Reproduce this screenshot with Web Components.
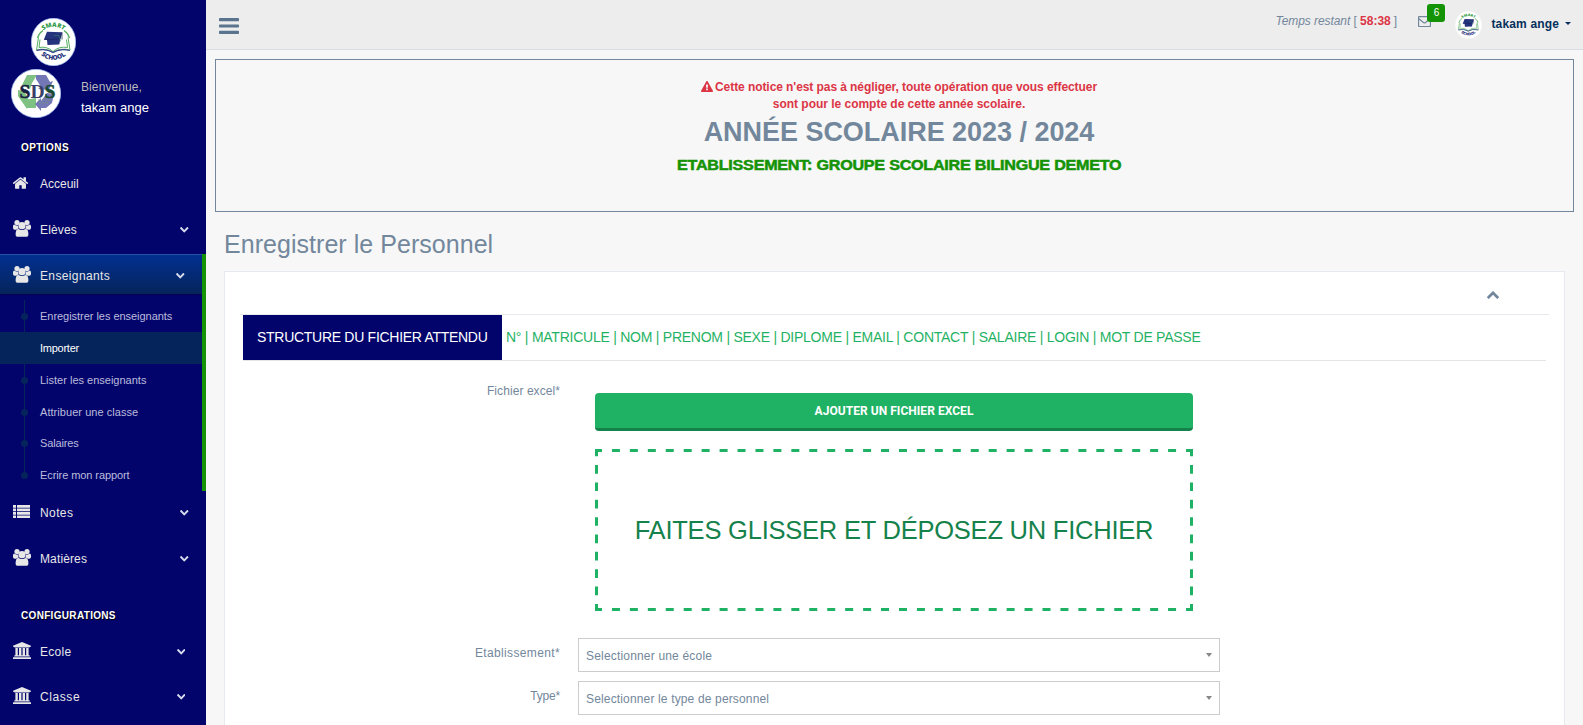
<!DOCTYPE html>
<html lang="fr">
<head>
<meta charset="utf-8">
<title>Enregistrer le Personnel</title>
<style>
html,body{margin:0;height:725px;overflow:hidden;background:#f7f7f7}
body{font:12px/17px "Liberation Sans",Arial,sans-serif;color:#73879c}
</style>
</head>
<body>
<school-app></school-app>
<script>
const define=(name,html,setup)=>customElements.define(name,class extends HTMLElement{
  connectedCallback(){
    if(this.shadowRoot)return;
    const t=document.createElement('template');
    t.innerHTML=typeof html==='function'?html(this):html;
    this.attachShadow({mode:'open'}).append(t.content.cloneNode(true));
    if(setup)setup(this);
  }
});

/* Text set to a given measure: the letters are spread evenly over w pixels. */
define('set-text','<style>:host{display:inline-block;white-space:pre}</style><span><slot></slot></span>',el=>{
  const span=el.shadowRoot.querySelector('span');
  const n=[...el.textContent].length, w=+el.getAttribute('w');
  const gap=(w-span.offsetWidth)/n;
  span.style.letterSpacing=gap.toFixed(3)+'px';
});

const ICONS={
home:['0 0 1792 1792','<path d="M1472 992v480q0 26-19 45t-45 19h-384v-384h-256v384h-384q-26 0-45-19t-19-45v-480q0-1 .5-3t.5-3l575-474 575 474q1 2 1 6zm223-69l-62 74q-8 9-21 11h-3q-13 0-21-7l-692-577-692 577q-12 8-24 7-13-2-21-11l-62-74q-8-10-7-23.5t11-21.5l719-599q32-26 76-26t76 26l244 204v-195q0-14 9-23t23-9h192q14 0 23 9t9 23v408l219 182q10 8 11 21.5t-7 23.5z"/>'],
users:['0 0 18 17','<circle cx="4" cy="2.6" r="2.6"/><circle cx="14" cy="2.6" r="2.6"/><path d="M0 8V6.500Q.1 4.600 1.200 4.600 2.600 5.900 5 5.600 5 7.600 5.800 8.400 4.100 8.800 3.300 9.800H1.800Q0 9.800 0 8zM18 8V6.500Q17.900 4.600 16.800 4.600 15.400 5.900 13 5.600 13 7.600 12.200 8.400 13.900 8.800 14.700 9.800H16.200Q18 9.800 18 8z"/><circle cx="9" cy="5.7" r="3.6"/><path d="M2.600 14.200Q2.600 8.900 5.600 8.900 7 9.900 9 9.900T12.400 8.900Q15.400 8.900 15.400 14.200 15.400 16.800 13 16.800H5Q2.600 16.800 2.600 14.200z"/>'],
list:['0 0 17 13','<path d="M0 0h3v2.700H0zM4 0h13v2.700H4zM0 3.500h3v2.700H0zM4 3.500h13v2.700H4zM0 7h3v2.700H0zM4 7h13v2.700H4zM0 10.500h3V13H0zM4 10.500h13V13H4z"/>'],
bank:['-128 128 1920 1792','<path d="M832 128l960 384v128h-128q0 26-20.5 45t-48.5 19h-1526q-28 0-48.5-19t-20.5-45h-128v-128zm-704 640h256v768h128v-768h256v768h128v-768h256v768h128v-768h256v768h59q28 0 48.5 19t20.5 45v64h-1664v-64q0-26 20.5-45t48.5-19h59zm1595 960q28 0 48.5 19t20.5 45v128h-1920v-128q0-26 20.5-45t48.5-19z"/>'],
down:['90 533 1612 1035','<path d="M1683 808l-742 741q-19 19-45 19t-45-19l-742-741q-19-19-19-45.5t19-45.5l166-165q19-19 45-19t45 19l531 531 531-531q19-19 45-19t45 19l166 165q19 19 19 45.5t-19 45.5z"/>'],
up:['90 480 1612 1035','<path d="M1683 1331l-166 165q-19 19-45 19t-45-19l-531-531-531 531q-19 19-45 19t-45-19l-166-165q-19-19-19-45.5t19-45.5l742-741q19-19 45-19t45 19l742 741q19 19 19 45.5t-19 45.5z"/>'],
warning:['0 0 1792 1664','<path d="M1024 1375v-190q0-14-9.5-23.5t-22.5-9.5h-192q-13 0-22.5 9.5t-9.5 23.5v190q0 14 9.5 23.5t22.5 9.5h192q13 0 22.5-9.5t9.5-23.5zm-2-374l18-459q0-12-10-19-13-11-24-11h-220q-11 0-24 11-10 7-10 21l17 457q0 10 10 16.5t24 6.5h185q14 0 23.5-6.5t10.5-16.5zm-14-934l768 1408q35 63-2 126-17 29-46.5 46t-63.5 17h-1536q-34 0-63.5-17t-46.5-46q-37-63-2-126l768-1408q17-31 47-49t65-18 65 18 47 49z"/>'],
bars:['0 0 20 16','<rect width="20" height="3.200" rx=".8"/><rect y="6.400" width="20" height="3.200" rx=".8"/><rect y="12.800" width="20" height="3.200" rx=".8"/>'],
mail:['0 0 13 11','<path d="M1.500.5h10q1 0 1 1v8q0 1-1 1h-10q-1 0-1-1v-8q0-1 1-1zM.6 2.500 5.400 6.400q1.100.8 2.200 0L12.400 2.500" fill="none" stroke="currentColor" stroke-width="1.250"/>'],
caret:['0 0 6 4','<path d="M0 0h6L3 4z"/>']
};
define('ui-icon',el=>{
  const [box,body]=ICONS[el.getAttribute('name')];
  return `<style>:host{display:block;flex:none}svg{display:block;width:100%;height:100%;fill:currentColor}</style><svg viewBox="${box}" preserveAspectRatio="none">${body}</svg>`;
});

define('smart-logo',`<style>:host{display:block;flex:none}svg{display:block;width:100%;height:100%}</style>
<svg viewBox="0 0 45 48" preserveAspectRatio="none">
<defs><path id="top" d="M8 18A16 16 0 0 1 37 18"/><path id="bot" d="M6 31.500A18.300 18.300 0 0 0 39 31.500"/></defs>
<ellipse cx="22.500" cy="24" rx="22.200" ry="23.700" fill="#fff" stroke="var(--ring,#a9c3ee)" stroke-width=".7"/>
<g font-family="Open Sans,sans-serif" font-weight="800" text-anchor="middle">
<text font-size="6.200" fill="#2f9a48"><textPath href="#top" startOffset="50%">SMART</textPath></text>
<text font-size="6.500" fill="#28347e"><textPath href="#bot" startOffset="50%">SCHOOL</textPath></text></g>
<path d="M6.500 20Q8 15 12 12.500M38.500 20Q37 15 33 12.500" fill="none" stroke="#58ae62" stroke-width="1.400"/>
<path d="M7.500 19.500 5.500 32Q15 29.500 22 34.500 29 29.500 39 32L37 19.500M9 21.500 8 29.500Q16 28 22 33.500 28 28 36.500 29.500L35.500 21.500" fill="none" stroke="#58ae62" stroke-width="1"/>
<path d="M5.500 32.500Q15 30 22 34.500 29 30 39 32.500" fill="none" stroke="#34428c" stroke-width="1.200"/>
<path d="M16 13.800 31 14.300 29.300 21 28.300 26.500 16.500 27 16 22 12.800 21.700z" fill="#25327e"/><path d="M13.500 21.600 29 21 31 14.500v7" fill="none" stroke="#151f58" stroke-width=".7"/>
<path d="M23 17.500h5l1.500 6" fill="none" stroke="#2f8060" stroke-width=".6"/>
</svg>`);

define('sds-logo',`<style>:host{display:block;flex:none}svg{display:block;width:100%;height:100%}</style>
<svg viewBox="0 0 50 49">
<ellipse cx="25" cy="24.500" rx="24.700" ry="24.200" fill="#fff" stroke="#9fbdee" stroke-width=".7"/>
<path d="M16 6h10l-5 8-2 6-8-4zM7 21l6 1 5 9-2 9-9-13zM14 31l11-2v10l-9 0z" fill="#7fc182"/>
<path d="M25 6h10l4 7 3-1-4 9-11-1 3-2-5-8zM36 24l7 1-2 9-6 5h-5v3l-6-7 6-6v3z" fill="#7477b5"/>
<g font-family="Liberation Serif,serif" font-weight="700" font-size="19.500" stroke-width=".5"><text x="8.500" y="28.500" textLength="36" lengthAdjust="spacingAndGlyphs"><tspan fill="#17203f" stroke="#17203f">S</tspan><tspan fill="#383f68">D</tspan><tspan fill="#184b32" stroke="#184b32">S</tspan></text></g>
<path d="M27 31h13M28 34h10" stroke="#6f9d63" stroke-width=".7" stroke-dasharray="2 1.500"/>
</svg>`);

define('nav-item',el=>`<style>
:host{display:flex;box-sizing:border-box;height:40px;padding:4px 0 0 13px;margin-bottom:6px;align-items:center;color:#e7e7e7}
:host([active]){margin:0 4px 0 0;background:linear-gradient(#023092,#05245b);box-shadow:inset 0 1px 0 #24529e,0 1px 0 #030350}
:host([tight]){margin-bottom:5px}
.i{width:27px;flex:none;padding-bottom:3px}
.i ui-icon{width:18px;height:17px}
.i .home{width:17px;height:16px;margin-left:-1px}
.i .list{width:17px;height:13px}
.t{flex:1}
.c{width:8.500px;height:5.500px;margin:0 17.500px 0 0;color:#d6dcec}
:host([tight]) .c{margin-right:21px}
</style><div class="i"><ui-icon class="${el.getAttribute('icon')}" name="${el.getAttribute('icon')}"></ui-icon></div><div class="t"><slot></slot></div>${el.hasAttribute('leaf')?'':'<ui-icon class="c" name="down"></ui-icon>'}`);

define('sub-item',`<style>
:host{display:flex;align-items:center;height:32px;padding-left:21px;font-size:11px;color:#bcbcdc}
:host([short]){height:31px}
:host([current]){background:#05245b;color:#fff}
i{width:7px;height:7px;border-radius:50%;background:#05245b;margin-right:12px}
:host([current]) i{visibility:hidden}
</style><i></i><slot></slot>`);

define('sub-menu',`<style>
:host{display:block;margin-right:4px;padding-top:6px;background:linear-gradient(#05245b,#05245b) 24px 6px/1px 176px no-repeat}
</style><slot></slot>`);

define('nav-heading','<style>:host{display:block;height:16px;line-height:16px;padding-left:21px;font-size:10px;font-weight:700;color:#fff;text-shadow:1px 1px #000}</style><slot></slot>');

define('side-nav',`<style>
:host{display:block;box-sizing:border-box;width:206px;height:725px;overflow:hidden;background:#02046c;padding-top:18px;flex:none}
.logo{width:45px;height:48px;margin-left:31px}
.who{display:flex;margin:3px 0 0 11px;height:71px}
sds-logo{width:50px;height:49px}
.names{margin:9px 0 0 20px}
.names div{height:21px;line-height:18px}
.hi{color:#bababa}.me{color:#fff;font-size:13px}
.first{margin-bottom:6px}
.group{box-shadow:inset -4px 0 #159306}
.second{margin:31px 0 6px}
</style>
<smart-logo class="logo"></smart-logo>
<div class="who"><sds-logo></sds-logo><div class="names"><div class="hi"><set-text w="61">Bienvenue,</set-text></div><div class="me"><set-text w="68">takam ange</set-text></div></div></div>
<nav-heading class="first"><set-text w="48">OPTIONS</set-text></nav-heading>
<nav-item icon="home" leaf><set-text w="39">Acceuil</set-text></nav-item>
<nav-item icon="users"><set-text w="37">Elèves</set-text></nav-item>
<div class="group"><nav-item icon="users" active><set-text w="70">Enseignants</set-text></nav-item>
<sub-menu>
<sub-item><set-text w="132">Enregistrer les enseignants</set-text></sub-item>
<sub-item current><set-text w="39">Importer</set-text></sub-item>
<sub-item><set-text w="106">Lister les enseignants</set-text></sub-item>
<sub-item><set-text w="98">Attribuer une classe</set-text></sub-item>
<sub-item short><set-text w="39">Salaires</set-text></sub-item>
<sub-item><set-text w="89.500">Ecrire mon rapport</set-text></sub-item>
</sub-menu></div>
<nav-item icon="list"><set-text w="33">Notes</set-text></nav-item>
<nav-item icon="users"><set-text w="47">Matières</set-text></nav-item>
<nav-heading class="second"><set-text w="94.500">CONFIGURATIONS</set-text></nav-heading>
<nav-item icon="bank" tight><set-text w="31.500">Ecole</set-text></nav-item>
<nav-item icon="bank" tight><set-text w="40.500">Classe</set-text></nav-item>`);

define('mail-badge',`<style>
:host{display:block;position:relative;width:13px;height:11px}
ui-icon{width:13px;height:11px}
b{position:absolute;left:9px;top:-12px;width:18px;height:18px;border-radius:3px;background:#159306;color:#fff;font-weight:400;font-size:10px;line-height:18px;text-align:center}
</style><ui-icon name="mail"></ui-icon><b><slot></slot></b>`);

define('top-bar',`<style>
:host{display:flex;box-sizing:border-box;height:50px;background:#ededed;border-bottom:1px solid #d9dee4;padding-left:13px}
.bars{width:20px;height:16px;margin-top:18px;color:#5a738e}
.time{margin:13px 22px 0 auto}.time b{color:#dc3545}
mail-badge{margin:16px 24px 0 0}
smart-logo{width:27px;height:28px;margin:11px 9px 0 0;--ring:#f4f4f4}
.user{margin:16px 6px 0 0;color:#06305c;font-weight:700}
.caret{width:6px;height:3px;margin:22px 12px 0 0;color:#06305c}
</style><ui-icon class="bars" name="bars"></ui-icon>
<div class="time"><set-text w="78" style="font-style:italic">Temps restant </set-text><set-text w="7">[ </set-text><set-text w="31"><b>58:38</b></set-text><set-text w="6"> ]</set-text></div>
<mail-badge>6</mail-badge><smart-logo></smart-logo><div class="user"><set-text w="67.500">takam ange</set-text></div><ui-icon class="caret" name="caret"></ui-icon>`);

define('year-notice',`<style>
:host{display:flex;flex-direction:column;align-items:center;box-sizing:border-box;height:153px;margin:9px 9px 0;border:1px solid #73879c;padding:19px 0 0 9px}
.w{display:flex;color:#dc3545;font-weight:700;height:17px}
.w ui-icon{width:12px;height:11px;margin:2px 2px 0 0}
.y{font-size:27px;font-weight:700;line-height:34px;margin-top:2px}
.e{font-weight:700;font-size:14px;line-height:20px;color:#159306;margin-top:6px;transform:scaleX(1.15);-webkit-text-stroke:.5px #159306}
</style>
<div class="w"><ui-icon name="warning"></ui-icon><set-text w="382">Cette notice n'est pas à négliger, toute opération que vous effectuer</set-text></div>
<div class="w"><set-text w="252">sont pour le compte de cette année scolaire.</set-text></div>
<div class="y"><set-text w="391">ANNÉE SCOLAIRE 2023 / 2024</set-text></div>
<div class="e"><set-text w="386">ETABLISSEMENT: GROUPE SCOLAIRE BILINGUE DEMETO</set-text></div>`);

define('file-format',`<style>
:host{display:flex;height:45px;margin:0 18px;border-bottom:1px solid #e5e5e5;font-size:14px;line-height:44px}
.k{background:#02046c;color:#fff;width:245px;padding-left:14px;margin-right:4px}
.v{color:#1fb264}
</style><div class="k"><set-text w="231">STRUCTURE DU FICHIER ATTENDU</set-text></div><div class="v"><set-text w="695">N° | MATRICULE | NOM | PRENOM | SEXE | DIPLOME | EMAIL | CONTACT | SALAIRE | LOGIN | MOT DE PASSE</set-text></div>`);

define('file-drop',`<style>
:host{display:block;width:598px}
.b{box-sizing:border-box;height:38px;border-radius:4px;border-bottom:3px solid #15824b;background:#1fb264;color:#fff;font:700 12px/37px Roboto,sans-serif;text-align:center}
.d{display:grid;height:162px;margin-top:18px;color:#15824b;font-size:25.500px;line-height:163px;text-align:center}
.d>*{grid-area:1/1}
svg{display:block}
</style><div class="b"><set-text w="159">AJOUTER UN FICHIER EXCEL</set-text></div><div class="d">
<svg width="598" height="162" fill="none" stroke="#1fb264" stroke-width="3"><path d="M-1 1.500H598M-1 160.500H598" stroke-dasharray="8 9.940"/><path d="M1.500 -1.350V162M596.500 -1.350V162" stroke-dasharray="8.700 8.670"/></svg>
<div><set-text w="519">FAITES GLISSER ET DÉPOSEZ UN FICHIER</set-text></div></div>`);

define('pick-list',`<style>
:host{display:flex;box-sizing:border-box;width:642px;height:34px;border:1px solid #ccc;padding:2px 7px 0 7px;align-items:center;justify-content:space-between;background:#fff}
ui-icon{width:6px;height:4px;color:#888;margin-bottom:2px}
</style><slot></slot><ui-icon name="caret"></ui-icon>`);

define('form-row',`<style>
:host{display:flex}
.l{width:335px;text-align:right;margin-right:18px;padding-top:7px}
</style><div class="l"><slot name="label"></slot></div><slot></slot>`);

define('staff-panel',`<style>
:host{display:block;box-sizing:border-box;width:1341px;height:500px;margin-left:18px;background:#fff;border:1px solid #e6e9ed}
.head{display:flex;justify-content:flex-end;box-sizing:border-box;height:43px;margin:0 15px;border-bottom:1px solid #e6e9ed;padding:19px 50px 0 0}
.head ui-icon{width:12px;height:8px}
.drop{margin-top:15px}
file-drop{margin:17px 0 0 17px}
.drop+form-row{margin-top:27px}
.last{margin-top:9px}
</style>
<div class="head"><ui-icon name="up"></ui-icon></div>
<file-format></file-format>
<form-row class="drop"><set-text slot="label" w="73">Fichier excel*</set-text><file-drop></file-drop></form-row>
<form-row><set-text slot="label" w="85">Etablissement*</set-text><pick-list><set-text w="126">Selectionner une école</set-text></pick-list></form-row>
<form-row class="last"><set-text slot="label" w="30">Type*</set-text><pick-list><set-text w="183">Selectionner le type de personnel</set-text></pick-list></form-row>`);

define('school-app',`<style>
:host{display:flex;width:1583px;height:725px;overflow:hidden}
main{flex:1;min-width:0}
h3{margin:0 0 0 18px;height:59px;line-height:64px;font-size:25px;font-weight:400}
</style><side-nav></side-nav><main><top-bar></top-bar><year-notice></year-notice><h3><set-text w="269">Enregistrer le Personnel</set-text></h3><staff-panel></staff-panel></main>`);
</script>
</body>
</html>
